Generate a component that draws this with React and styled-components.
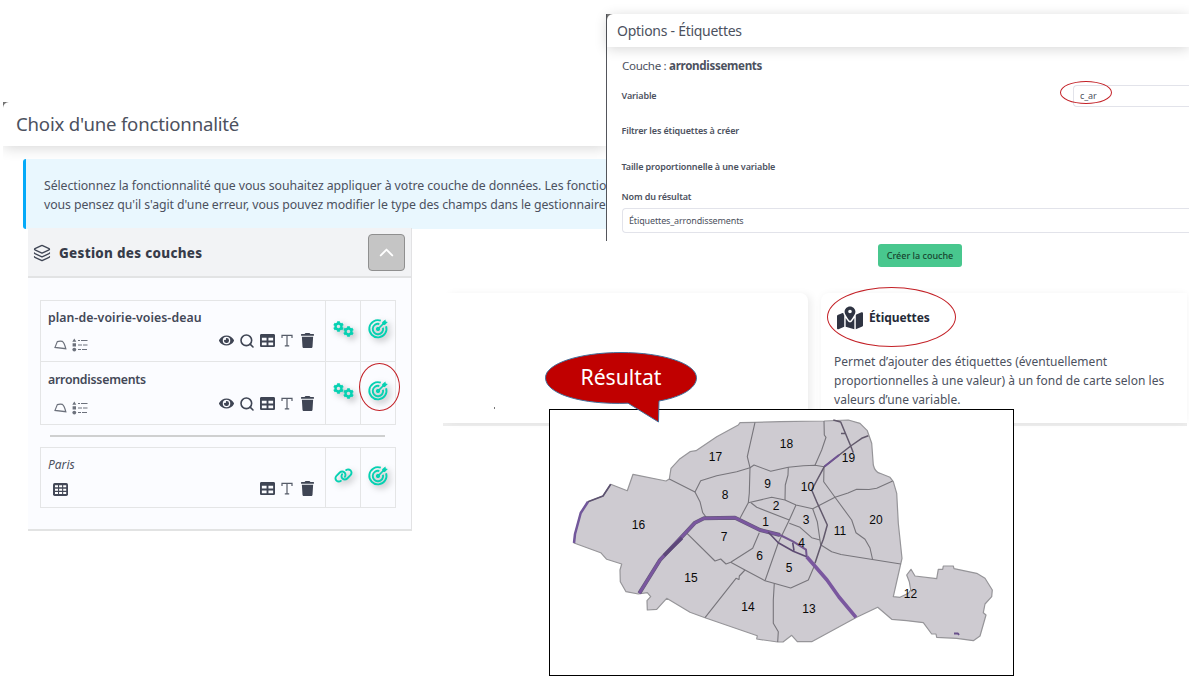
import React from 'react';
import styled, { createGlobalStyle } from 'styled-components';
import { FaEye, FaTable, FaCog } from 'react-icons/fa';
import { FaMapLocationDot, FaLink, FaTrash } from 'react-icons/fa6';
import { Layers, Search, ChevronUp } from 'lucide-react';

const Global = createGlobalStyle`
  * { box-sizing: border-box; }
  body { margin: 0; background: #fff; overflow: hidden; }
`;

const Canvas = styled.main`
  position: relative;
  width: 1189px;
  height: 676px;
  overflow: hidden;
  background: #fff;
  color: #3f4554;
  font-family: "Noto Sans", "Open Sans", sans-serif;
`;

const Pane = styled.section`
  position: absolute;
  left: ${(p) => p.$x}px;
  top: ${(p) => p.$y}px;
  width: ${(p) => p.$w}px;
  height: ${(p) => p.$h}px;
  display: flex;
  flex-direction: column;
`;

const Txt = styled.span`
  display: block;
  white-space: nowrap;
  font-size: ${(p) => p.$size}px;
  line-height: ${(p) => p.$lh || 20}px;
  font-weight: ${(p) => p.$weight || 400};
  font-style: ${(p) => (p.$italic ? 'italic' : 'normal')};
  letter-spacing: ${(p) => p.$ls || 0}px;
  color: ${(p) => p.$color || '#4c515e'};
`;

/* feature picker */
const PickerPane = styled(Pane)`
  overflow: hidden;
  background: linear-gradient(135deg, #777 0 4px, transparent 5px);
`;
const PickerHeader = styled.header`
  height: 44px;
  flex: none;
  padding: 8px 0 0 13px;
  border-radius: 6px 0 0 0;
  background: #fff;
  box-shadow: 0 2px 14px rgba(0, 0, 0, 0.16);
`;
const Notice = styled.div`
  height: 70px;
  margin: 13px 0 0 20px;
  padding: 17px 0 0 18px;
  background: #e9f7fe;
  border-left: 3px solid #04aaf8;
  border-radius: 3px 0 0 3px;
`;

/* layer manager */
const ManagerPane = styled(Pane)`
  background: #fbfcff;
  border-right: 1px solid #e2e2e4;
  border-bottom: 2px solid #e2e3e3;
`;
const ManagerHeader = styled.header`
  height: 50px;
  flex: none;
  display: flex;
  align-items: center;
  gap: 8px;
  padding: 1px 6px 0 5px;
  background: #f2f3f5;
  border-bottom: 2px solid #e2e3e4;
`;
const Collapse = styled.button`
  width: 37px;
  height: 37px;
  margin-left: auto;
  padding: 0;
  display: grid;
  place-items: center;
  color: #fff;
  background: #c5c5c5;
  border: 1px solid #8f8f8f;
  border-radius: 4px;
`;
const Rows = styled.div`
  display: flex;
  flex-direction: column;
  padding: 22px 15px 0 12px;
`;
const Row = styled.div`
  height: ${(p) => p.$h}px;
  display: grid;
  grid-template-columns: 284px 35px 35px;
  border: 1px solid #e4e5e6;
  border-top-width: ${(p) => (p.$joined ? 0 : 1)}px;
`;
const Info = styled.div`
  display: flex;
  flex-direction: column;
  justify-content: space-between;
  padding: ${(p) => p.$top}px 10px ${(p) => p.$bottom}px 7px;
`;
const Line = styled.div`
  display: flex;
  align-items: center;
  justify-content: space-between;
  height: 20px;
`;
const Group = styled.div`
  display: flex;
  align-items: center;
  gap: 5px;
  margin-left: ${(p) => p.$indent || 0}px;
  margin-top: ${(p) => p.$drop || 0}px;
  svg { display: block; }
`;
const Action = styled.div`
  display: grid;
  place-items: center;
  padding-bottom: 4px;
  border-left: 1px solid #e4e5e6;
  color: #06d1b2;
  > * { filter: drop-shadow(3px 3px 3px rgba(0, 0, 0, 0.28)); overflow: visible; }
`;
const CogPair = styled.div`
  display: flex;
  align-items: flex-start;
  svg { display: block; }
  svg + svg { margin: 5px 0 0 -1px; }
`;
const Divider = styled.hr`
  width: 335px;
  height: 2px;
  margin: 10px 0 10px 10px;
  border: 0;
  background: #cfd0d0;
`;

/* options dialog */
const OptionsPane = styled(Pane)`
  background: linear-gradient(135deg, #777 0 4px, #fff 5px);
  border-left: 1px solid #53555b;
`;
const OptionsHeader = styled.header`
  height: 33px;
  flex: none;
  padding: 4px 0 0 10px;
  border-radius: 6px 0 0 0;
  background: #fff;
  box-shadow: 0 2px 13px rgba(0, 0, 0, 0.16);
`;
const Form = styled.div`
  display: flex;
  flex-direction: column;
  padding-left: 15px;
`;
const Field = styled.div`
  display: flex;
  align-items: center;
  justify-content: space-between;
  height: ${(p) => p.$h}px;
  padding-top: ${(p) => p.$pt || 0}px;
`;
const Label = styled(Txt)`
  margin-left: -0.5px;
  font-size: 9px;
  font-weight: 600;
  letter-spacing: -0.12px;
`;
const Input = styled.div`
  width: ${(p) => p.$w};
  height: ${(p) => p.$h}px;
  padding-left: 6px;
  display: flex;
  align-items: center;
  background: #fff;
  border: 1px solid #e2e3ea;
  border-right: 0;
  border-radius: 4px 0 0 4px;
`;
const Create = styled.button`
  position: absolute;
  left: 878px;
  top: 244px;
  width: 84px;
  height: 23px;
  padding: 0;
  display: grid;
  place-items: center;
  font-family: inherit;
  background: #48c78e;
  border: 0;
  border-radius: 3px;
`;

/* feature cards */
const CardsPane = styled(Pane)`
  flex-direction: row;
  justify-content: space-between;
  border-bottom: 3px solid #ededed;
`;
const Card = styled.article`
  width: ${(p) => p.$w}px;
  padding: 12px 0 0 13px;
  background: #fff;
  border-radius: ${(p) => (p.$left ? '0 8px 0 0' : '8px 0 0 0')};
  box-shadow: ${(p) => (p.$left ? '5px' : '0')} 0 9px -2px rgba(10, 10, 10, 0.08);
`;
const CardTitle = styled.div`
  display: flex;
  align-items: center;
  gap: 6px;
  height: 25px;
  margin-bottom: 22px;
  padding-left: 3px;
  color: #2f3442;
`;
const Dot = styled.i`
  position: absolute;
  left: 494px;
  top: 407px;
  width: 1px;
  height: 2px;
  background: #777;
`;

const MapFrame = styled(Pane)`
  background: #fff;
  border: 1px solid #000;
  svg { display: block; }
`;
const Ring = styled.div`
  position: absolute;
  left: ${(p) => p.$x}px;
  top: ${(p) => p.$y}px;
  width: ${(p) => p.$w}px;
  height: ${(p) => p.$h}px;
  border: 1px solid #c32026;
  border-radius: 50%;
`;
const Bubble = styled.div`
  position: absolute;
  left: 544px;
  top: 351px;
  width: 154px;
  height: 73px;
  display: grid;
  grid-template-columns: 154px;
  grid-template-rows: 73px;
  > * { grid-area: 1 / 1; }
  > span { text-align: center; padding-top: 11px; z-index: 1; }
`;

const Target = () => (
  <svg width="20" height="20" viewBox="0 0 20 20" fill="none" stroke="currentColor" strokeWidth="1.9">
    <path d="M12.8 1.7A8.6 8.6 0 1 0 18.1 7.2" />
    <path d="M11.3 5A5.2 5.2 0 1 0 15 8.8" />
    <circle cx="10" cy="10" r="1.7" fill="currentColor" strokeWidth="1" />
    <path d="M10 10 16 4" strokeWidth="1.7" />
    <path d="m14.1 3.3 3.3-2.8.4 2 2 .4-2.9 3.2-2.4-.3z" fill="currentColor" stroke="none" />
  </svg>
);
const LetterT = () => (
  <svg width="12" height="13" viewBox="0 0 12 13" fill="none" stroke="#555b68" strokeWidth="1.2">
    <path d="M1 4V1.3h10V4M6 1.3v10.4M3.8 11.9h4.4" />
  </svg>
);
const Polygon = () => (
  <svg width="13" height="10" viewBox="0 0 13 10" fill="none" stroke="#6c717c" strokeWidth="1.2">
    <path d="M3.3 1.6Q6 .6 8.4 1.4 10.3 2.6 11.8 8.7L1 7.4z" />
  </svg>
);
const Legend = () => (
  <svg width="16" height="14" viewBox="0 0 16 14" fill="#6c717c">
    <path d="M2.3.4 4.3 3.7H.3zM.6 5.2h3.4v3.4H.6z" />
    <circle cx="2.3" cy="11.6" r="1.9" />
    <path d="M6 2h2v1H6zM9 2h6.5v1H9zM6 6.5h4v1H6zM11 6.5h4.5v1H11zM6 11h3v1H6zM10 11h5v1.1h-5z" />
  </svg>
);
const Grid = () => (
  <svg width="15" height="13" viewBox="0 0 15 13">
    <rect width="15" height="13" rx="1.7" fill="#434857" />
    <path d="M2 2.3h3v2H2zM6.1 2.3h3v2h-3zM10.2 2.3h3v2h-3zM2 5.7h3v2H2zM6.1 5.7h3v2h-3zM10.2 5.7h3v2h-3zM2 9.1h3v2H2zM6.1 9.1h3v2h-3zM10.2 9.1h3v2h-3z" fill="#fff" />
  </svg>
);

const Tools = ({ full }) => (
  <Group $drop={-1}>
    {full && <FaEye size={15} />}
    {full && <Search size={16} strokeWidth={2.4} />}
    <FaTable size={15} />
    <Group $indent={1}><LetterT /></Group>
    <Group $indent={2}><FaTrash size={15} /></Group>
  </Group>
);

const Layer = ({ name, h, joined, table, ls, top = 7, bottom = 10 }) => (
  <Row $h={h} $joined={joined}>
    <Info $top={top} $bottom={bottom}>
      <Txt
        $size={table ? 12 : 12.3}
        $weight={table ? 400 : 600}
        $color={table ? undefined : '#434857'}
        $italic={table}
        $ls={ls}
      >
        {name}
      </Txt>
      <Line>
        {table ? (
          <Group $indent={5}><Grid /></Group>
        ) : (
          <Group $indent={6} $drop={8}><Polygon /><Legend /></Group>
        )}
        <Tools full={!table} />
      </Line>
    </Info>
    <Action>
      {table ? <FaLink size={19} /> : <CogPair><FaCog size={11} /><FaCog size={11} /></CogPair>}
    </Action>
    <Action><Target /></Action>
  </Row>
);

const outline =
  'M574 543 575 534 580.7 513 588 501.7 603 496 610.7 484.3 627.3 490.7 633 474.3 666 481 669.3 479 671 468.3 679.3 459.3 690 451.7 696 450.7 716.7 436.7 738.3 425 740 422.7 755 422.3 780 421.7 824 421 848.3 420 860 423.3 867.3 430.7 871.7 443.3 873.3 465Q875 472 880 473.3L890 477.3 893.3 481.7 896.7 493.3 898.3 523.3 902 558.3 900.7 564 893.3 596.7 900 597.3 908.3 593.3 910.7 590 909.3 581.7 906.7 575 911 569.3 915 576 936.7 578.7 938.3 569.3 942.7 569.3 943.3 566 953.3 566 954 568.7 976.7 573.3 985 578.3 992.3 590 991.7 596.7 985 604 983.3 612.7 986 615 980 636 973.3 640.7 956.7 638.3 936.7 637.3 936 634 931.7 634 923.3 622.7 906.7 620.7 891.7 619.3 877.7 607.3 856.7 617.3 811.7 641.7 797.3 641.7 791.7 635.3 783 642 777.7 642 756.7 639 757.3 635.7 705 617.7 690 612.3 666.7 598.3 656.7 609.3 647.3 610 647 600.7 650.7 596.7 647.3 592.7 638.3 594 626 591.7 620.3 581.7 620 570 621.7 564 606.7 559.3 600.7 552.7z';

const borders = [
  'M669.3 479 695 492 700.7 480.7 716.7 475.7 736.7 471.7 750 467.7 754 465 770.7 471.3 788.3 467.3 803.3 465.7 815 465.3 824 466.7 823.7 481.7 835 497.3 851.7 520 856 532.7 865 539.3 870 548 872.7 560',
  'M755 422.3 747.3 456.7 750 467.7 749.3 493.3 748.3 502.7 740 518.3',
  'M695 492 700 501.7 702.7 512.7 706 517',
  'M748.3 502.7 771.7 497.3 785 500 796 505 812.7 508.7 835 497.3 848 493 856.7 489.3 869 489.5 876.7 488.3 892.7 481',
  'M788.3 467.3 788 475 785.3 485 785 500',
  'M751 502.7 756.7 507.3 789.3 520',
  'M824 421 824.3 435 826 437.3 821.7 450 815 465.3',
  'M821 545 831.7 551.7 841 554.5 900.7 564',
  'M812.7 508.7 817.3 521.7 820.7 545',
  'M796 505 789.3 520 778.3 542.7 765 580.7',
  'M789.3 523.3 800 527.3 811.7 537.7 820 540',
  'M759.3 532.7 752.7 548.3 730.7 562.3 726 564 720.7 559 715 561 686 532.3',
  'M730.7 562.3 745 570 765 580.7 790.7 588 808.3 580 814.3 566',
  'M745 570 739.3 576 739 579.5 736 578.3 705 617.7',
  'M774.3 583.3 773.3 600 773.3 623.3 778.3 631.7 777.7 642',
];

const labels = [
  [17, 715.5, 461], [18, 786.5, 448], [19, 848.5, 462], [10, 807.5, 490.5], [9, 767.5, 487.5],
  [8, 725, 499], [2, 776, 510], [3, 806, 524], [1, 765.5, 525.5], [4, 801.5, 547],
  [11, 840, 534.5], [20, 876, 523.5], [7, 724, 540.5], [6, 759.5, 560], [5, 789, 572],
  [15, 691, 582], [14, 748, 611], [13, 809, 612.5], [12, 910.5, 598], [16, 638.5, 529],
];

const seine = 'M639.3 593.3 660 560 686 532.3 695 522.7 704 518.3 735 517.7 760 530 780 535';

const ParisMap = () => (
  <svg width="463" height="265" viewBox="550 410 463 265" fill="none" strokeLinejoin="round">
    <path d={outline} fill="#cecbd1" stroke="#969599" strokeWidth="1.2" />
    {borders.map((d) => <path key={d} d={d} stroke="#77757b" strokeWidth="1.1" />)}
    <path d="M574 543 575 534 580.7 513 588 501.7" stroke="#72579b" strokeWidth="2.5" />
    <path d="M588 501.7 603 496 610.7 484.3" stroke="#5d5270" strokeWidth="1.7" />
    <path d={seine} stroke="#655a78" strokeWidth="4" />
    <path d={seine} stroke="#7a579f" strokeWidth="2.8" />
    <path d="M664 555.5 682 538" stroke="#5d4779" strokeWidth="3.2" />
    <path d="M780 535 793.3 541.7 806 549.7 806.7 556.7" stroke="#71568f" strokeWidth="2" />
    <path d="M768.3 532.3 778.3 542.7 793.3 551.2 806.7 556.7M792.7 542.7 794 550.7" stroke="#5d4b72" strokeWidth="1.6" />
    <path d="M806.7 556.7 813.3 564.3 827 580 839 597 856 617.3" stroke="#7a579f" strokeWidth="3.6" />
    <path d="M833.3 420 840.7 422 850.7 446 853.3 452.7M841 433.5h4M868.3 435.7 861.7 438.3 850.7 446 824.3 466.7 811.7 490 816.7 501.7 827.3 525 823.3 539.3 820.7 546 815 563.3" stroke="#62596c" strokeWidth="1.5" />
    <path d="M824.5 466.5 839 455" stroke="#705393" strokeWidth="2" />
    <path d="M954 633.5h4l1 1.5" stroke="#69508b" strokeWidth="1.8" />
    <g fill="#080808" fontFamily="Liberation Sans, Arial, sans-serif" fontSize="12" textAnchor="middle">
      {labels.map(([n, x, y]) => <text key={n} x={x} y={y}>{n}</text>)}
    </g>
  </svg>
);

export default function App() {
  return (
    <Canvas>
      <Global />

      <PickerPane $x={3} $y={102} $w={603} $h={128}>
        <PickerHeader>
          <Txt $size={18.6} $lh={28} $ls={-0.2}>Choix d'une fonctionnalité</Txt>
        </PickerHeader>
        <Notice>
          <Txt $size={12.3} $lh={19} $ls={-0.08}>Sélectionnez la fonctionnalité que vous souhaitez appliquer à votre couche de données. Les fonctio</Txt>
          <Txt $size={12.3} $lh={19} $ls={-0.08}>vous pensez qu'il s'agit d'une erreur, vous pouvez modifier le type des champs dans le gestionnaire</Txt>
        </Notice>
      </PickerPane>

      <CardsPane $x={443} $y={293} $w={744} $h={133}>
        <Card $left $w={365} />
        <Card $w={366}>
          <CardTitle>
            <FaMapLocationDot size={26} />
            <Txt $size={12} $weight={700} $ls={-0.1} $color="#252a38">Étiquettes</Txt>
          </CardTitle>
          <Txt $size={12} $lh={19} $ls={0.03}>Permet d’ajouter des étiquettes (éventuellement</Txt>
          <Txt $size={12} $lh={19} $ls={0.03}>proportionnelles à une valeur) à un fond de carte selon les</Txt>
          <Txt $size={12} $lh={19} $ls={0.03}>valeurs d’une variable.</Txt>
        </Card>
      </CardsPane>
      <Dot />

      <ManagerPane $x={28} $y={228} $w={384} $h={303}>
        <ManagerHeader>
          <Layers size={18} strokeWidth={1.7} />
          <Txt $size={13.4} $weight={800} $ls={0.3} $color="#363b49">Gestion des couches</Txt>
          <Collapse><ChevronUp size={23} strokeWidth={2} /></Collapse>
        </ManagerHeader>
        <Rows>
          <Layer name="plan-de-voirie-voies-deau" h={62} ls={0.08} />
          <Layer name="arrondissements" h={63} ls={-0.24} top={8} joined />
          <Divider />
          <Layer name="Paris" h={61} bottom={8} table />
        </Rows>
      </ManagerPane>

      <OptionsPane $x={606} $y={14} $w={583} $h={227}>
        <OptionsHeader>
          <Txt $size={14} $lh={26} $ls={-0.27}>Options - Étiquettes</Txt>
        </OptionsHeader>
        <Form>
          <Field $h={38}>
            <Txt $size={11.6} $ls={-0.32}>Couche : <b>arrondissements</b></Txt>
          </Field>
          <Field $h={21}>
            <Label>Variable</Label>
            <Input $w="116px" $h={22}><Txt $size={9} $ls={-0.1}>c_ar</Txt></Input>
          </Field>
          <Field $h={50}><Label>Filtrer les étiquettes à créer</Label></Field>
          <Field $h={21}><Label>Taille proportionnelle à une variable</Label></Field>
          <Field $h={31} $pt={9}><Label>Nom du résultat</Label></Field>
          <Input $w="100%" $h={25}><Txt $size={9} $ls={-0.14}>Étiquettes_arrondissements</Txt></Input>
        </Form>
      </OptionsPane>
      <Create><Txt $size={9} $weight={500} $color="#17452f">Créer la couche</Txt></Create>

      <MapFrame $x={549} $y={409} $w={465} $h={267}><ParisMap /></MapFrame>

      <Bubble>
        <Txt $size={21.2} $lh={30} $color="#fff">Résultat</Txt>
        <svg width="154" height="73" viewBox="544 351 154 73">
          <path d="M659 401 658.5 422 628 403.2C582 405 545.5 394 545.5 377.8 545.5 363.5 579.5 352.5 621 352.5S696.500 363.500 696.500 377.800C696.500 388 682 397 659 401z" fill="#c00000" stroke="#41719c" />
        </svg>
      </Bubble>

      <Ring $x={359} $y={363} $w={41} $h={48} />
      <Ring $x={1060} $y={81} $w={52} $h={23} />
      <Ring $x={827} $y={287} $w={129} $h={60} />
    </Canvas>
  );
}
